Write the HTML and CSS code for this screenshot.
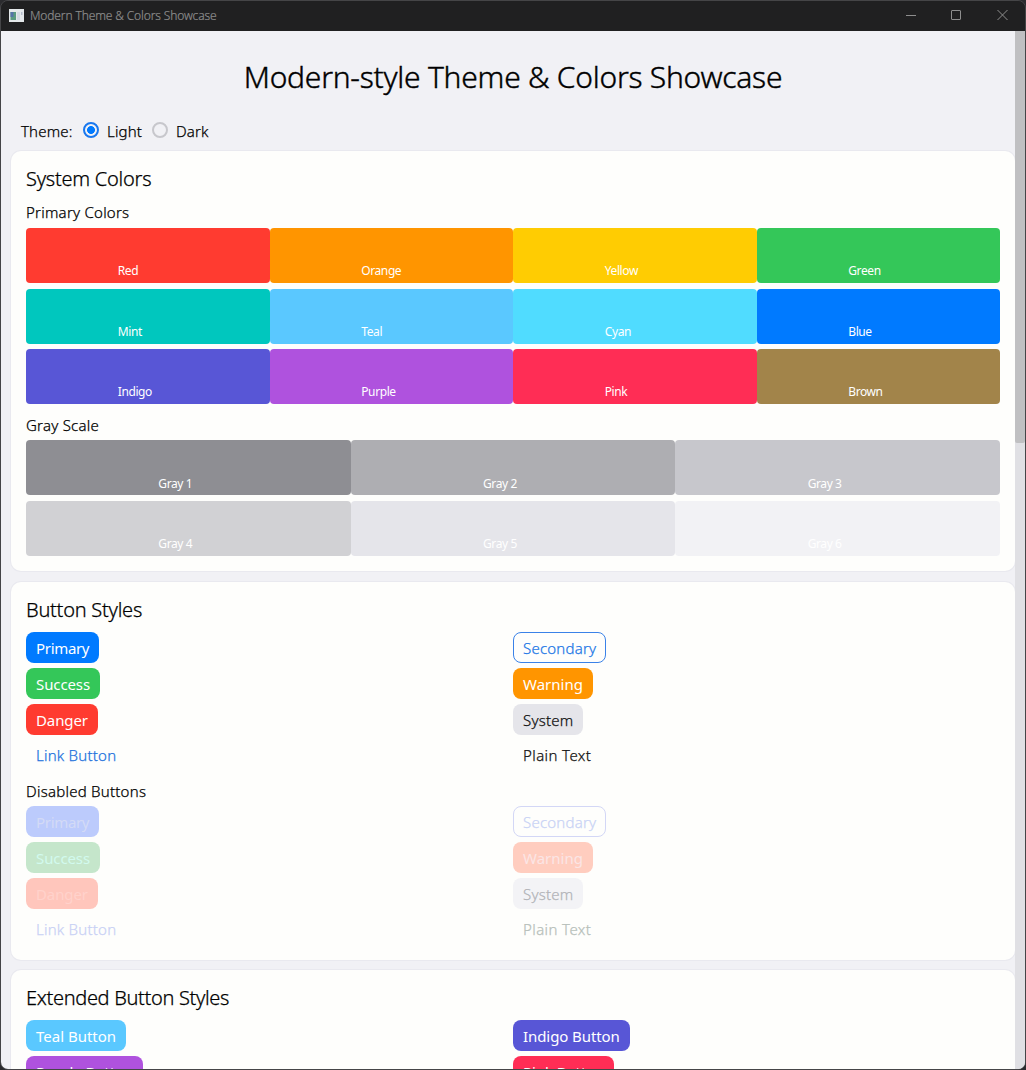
FILE: index.html
```html
<!DOCTYPE html>
<html lang="en">
<head>
<meta charset="utf-8">
<title>Modern Theme &amp; Colors Showcase</title>
<link rel="stylesheet" href="styles.css">
</head>
<body>
<div class="window">
  <header class="titlebar">
    <svg class="app-icon" width="15" height="13" viewBox="0 0 15 13">
      <rect width="15" height="13" fill="#e4e8ea"/>
      <rect x="1.500" y="3" width="5.500" height="8" fill="#5a9a80"/>
      <rect x="1.500" y="3" width="3" height="5" fill="#5573a8"/>
      <rect x="8" y="3" width="3" height="8" fill="#d3d9e2"/>
      <rect x="12" y="3" width="1.500" height="3" fill="#b5bccb"/>
    </svg>
    <span class="caption">Modern Theme &amp; Colors Showcase</span>
    <svg class="window-controls" width="104" height="12" viewBox="0 0 104 12" fill="none" stroke="#8e8e8e">
      <path d="M0 6.500h10"/>
      <rect x="45.500" y="1.500" width="9" height="9" rx="0.500"/>
      <path d="M91.500 1l10 10M101.500 1l-10 10"/>
    </svg>
  </header>
  <div class="viewport">
    <main class="page">
      <h1 class="page-title">Modern-style Theme &amp; Colors Showcase</h1>
      <div class="theme-row">
        <span class="theme-label">Theme:</span>
        <span class="radio radio-on"></span><span class="option">Light</span>
        <span class="radio"></span><span class="option">Dark</span>
      </div>

      <section class="card card-colors">
        <h2>System Colors</h2>
        <h3>Primary Colors</h3>
        <div class="swatches four">
          <div class="swatch red"><span>Red</span></div>
          <div class="swatch orange"><span>Orange</span></div>
          <div class="swatch yellow"><span>Yellow</span></div>
          <div class="swatch green"><span>Green</span></div>
          <div class="swatch mint"><span>Mint</span></div>
          <div class="swatch teal"><span>Teal</span></div>
          <div class="swatch cyan"><span>Cyan</span></div>
          <div class="swatch blue"><span>Blue</span></div>
          <div class="swatch indigo"><span>Indigo</span></div>
          <div class="swatch purple"><span>Purple</span></div>
          <div class="swatch pink"><span>Pink</span></div>
          <div class="swatch brown"><span>Brown</span></div>
        </div>
        <h3 class="next">Gray Scale</h3>
        <div class="swatches three">
          <div class="swatch gray1"><span>Gray 1</span></div>
          <div class="swatch gray2"><span>Gray 2</span></div>
          <div class="swatch gray3"><span>Gray 3</span></div>
          <div class="swatch gray4"><span>Gray 4</span></div>
          <div class="swatch gray5"><span>Gray 5</span></div>
          <div class="swatch gray6"><span>Gray 6</span></div>
        </div>
      </section>

      <section class="card card-buttons">
        <h2>Button Styles</h2>
        <div class="buttons">
          <button class="btn blue w-primary">Primary</button>
          <button class="btn outline">Secondary</button>
          <button class="btn green w-success">Success</button>
          <button class="btn orange w-warning">Warning</button>
          <button class="btn red w-danger">Danger</button>
          <button class="btn system">System</button>
          <button class="btn link">Link Button</button>
          <button class="btn plain">Plain Text</button>
        </div>
        <h3 class="after-buttons">Disabled Buttons</h3>
        <div class="buttons">
          <button class="btn off-blue w-primary" disabled>Primary</button>
          <button class="btn outline off-outline" disabled>Secondary</button>
          <button class="btn off-green w-success" disabled>Success</button>
          <button class="btn off-orange w-warning" disabled>Warning</button>
          <button class="btn off-red w-danger" disabled>Danger</button>
          <button class="btn system off-system" disabled>System</button>
          <button class="btn link off-link" disabled>Link Button</button>
          <button class="btn plain off-plain" disabled>Plain Text</button>
        </div>
      </section>

      <section class="card">
        <h2 class="wide">Extended Button Styles</h2>
        <div class="buttons">
          <button class="btn teal">Teal Button</button>
          <button class="btn indigo">Indigo Button</button>
          <button class="btn purple">Purple Button</button>
          <button class="btn pink">Pink Button</button>
        </div>
      </section>
    </main>
    <div class="scrollbar"><div class="thumb"></div></div>
  </div>
</div>
</body>
</html>
```
FILE: styles.css
```css
* { box-sizing: border-box; }
html, body { margin: 0; height: 100%; }
body {
  background: #2b2b2e;
  font-family: "Noto Sans", sans-serif;
  font-weight: 300;
  color: #000;
  overflow: hidden;
}
.window {
  width: 1026px;
  height: 1070px;
  border: 1px solid #454547;
  border-radius: 8px;
  overflow: hidden;
  display: flex;
  flex-direction: column;
}
.titlebar {
  flex: none;
  height: 30px;
  background: #202021;
  display: flex;
  align-items: center;
  padding: 0 15px 2px 8px;
}
.app-icon { margin-right: 6px; }
.caption {
  flex: 1;
  padding-top: 2px;
  font-size: 12px;
  line-height: 20px;
  letter-spacing: -0.13px;
  color: #8c8c8c;
  -webkit-text-stroke: 0.2px;
}
.window-controls { flex: none; }
.viewport { flex: 1; min-height: 0; display: flex; background: #f1f1f5; }
.page {
  flex: 1;
  padding: 26px 0 0 10px;
  display: flex;
  flex-direction: column;
  overflow: hidden;
}
.page-title {
  margin: 0;
  font-size: 30px;
  line-height: 40px;
  font-weight: 300;
  letter-spacing: -0.25px;
  text-align: center;
  -webkit-text-stroke: 0.4px;
}
.theme-row {
  display: flex;
  align-items: center;
  height: 26px;
  margin: 24px 0 10px;
  padding-left: 10px;
  font-size: 15px;
  line-height: 20px;
  -webkit-text-stroke: 0.25px;
}
.theme-label { width: 61px; letter-spacing: 0.15px; }
.option { width: 45px; margin-left: 8px; letter-spacing: 0.15px; }
.radio {
  width: 16px;
  height: 16px;
  margin: -2px 0 0 1px;
  border: 2px solid #c7c7cc;
  border-radius: 50%;
}
.option + .radio { margin-left: 0; }
.radio-on {
  border-color: #1a78ee;
  background: radial-gradient(circle, #007aff 3.6px, transparent 4.3px);
}
.card {
  flex: none;
  padding: 15px;
  margin-bottom: 10px;
  border-radius: 10px;
  background: #fefefc;
  box-shadow: 0 0 0 1px #e9e9ef;
}
.card-colors { height: 420px; margin-bottom: 11px; }
.card-buttons { height: 378px; }
h2, h3 { margin: 0; font-weight: 300; -webkit-text-stroke: 0.25px; }
h2 { font-size: 20px; line-height: 26px; letter-spacing: -0.25px; }
h2.wide { letter-spacing: -0.33px; }
h3 { font-size: 15px; line-height: 20px; margin: 10px 0 6px; letter-spacing: 0.24px; }
h3.next { margin: 11px 0 5px; }
h3.after-buttons { margin: 11px 0 -4px; }
.swatches { display: grid; row-gap: 5.5px; }
.four { grid-template-columns: repeat(4, 1fr); }
.three { grid-template-columns: repeat(3, 1fr); }
.swatch {
  height: 55px;
  border-radius: 4px;
  display: flex;
  justify-content: center;
  align-items: flex-end;
  padding-bottom: 3px;
}
.three .swatch { padding-bottom: 2.5px; }
.swatch span {
  width: 60px;
  font-size: 12px;
  line-height: 18px;
  font-weight: 400;
  letter-spacing: -0.4px;
  color: #fff;
}
.red { background: #ff3b30; }
.orange { background: #ff9500; }
.yellow { background: #ffcc02; }
.green { background: #34c759; }
.mint { background: #00c7be; }
.teal { background: #5ac8ff; }
.cyan { background: #50dcff; }
.blue { background: #007aff; }
.indigo { background: #5856d6; }
.purple { background: #af52de; }
.pink { background: #ff2d55; }
.brown { background: #a2844a; }
.gray1 { background: #8e8e93; }
.gray2 { background: #aeaeb2; }
.gray3 { background: #c7c7cc; }
.gray4 { background: #d1d1d4; }
.gray5 { background: #e5e5ea; }
.gray6 { background: #f2f2f5; }
.buttons {
  display: grid;
  grid-template-columns: 1fr 1fr;
  justify-items: start;
  row-gap: 5px;
  margin-top: 9px;
}
.btn {
  height: 31px;
  padding: 1px 10px 0;
  border: 0;
  border-radius: 8px;
  font-family: inherit;
  font-size: 15px;
  line-height: 20px;
  font-weight: 400;
  color: #fff;
}
.w-primary { letter-spacing: -0.32px; }
.w-success { letter-spacing: -0.1px; }
.w-danger { letter-spacing: -0.12px; }
.btn.indigo, .btn.purple, .btn.pink { letter-spacing: -0.08px; }
.outline, .system, .link, .plain {
  font-weight: 300;
  letter-spacing: 0.22px;
  -webkit-text-stroke: 0.25px;
  color: #111;
}
.outline { border: 1px solid #3a82e8; padding: 0 9px; background: #fefefc; color: #2277e6; }
.system { background: #e5e5ea; }
.link, .plain { background: none; height: 30px; padding-top: 0; }
.link { color: #2272dc; }
.plain { letter-spacing: 0.4px; }
.off-blue { background: #bccbfc; color: #d3daf6; }
.off-green { background: #c5e6cb; color: #d2faee; }
.off-orange { background: #ffcdbf; color: #fbe5e5; }
.off-red { background: #ffc6bc; color: #ffd2cb; }
.off-outline { border-color: #d3d7f6; color: #c9d3f5; }
.off-system { background: #f3f3f6; color: #b2b3b8; }
.off-link { color: #c9d1f5; }
.off-plain { color: #b7c0ba; }
.scrollbar { width: 10px; flex: none; background: #e0e0e4; }
.thumb { height: 412px; background: #c0c0c2; border-radius: 0 0 2px 2px; }
```
